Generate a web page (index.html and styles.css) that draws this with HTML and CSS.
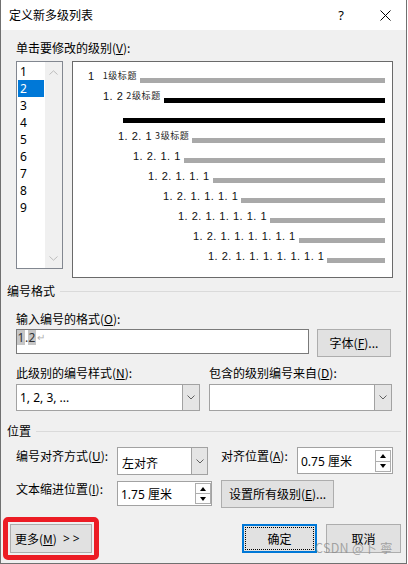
FILE: index.html
```html
<!DOCTYPE html>
<html lang="zh-CN">
<head>
<meta charset="utf-8">
<title>定义新多级列表</title>
<link rel="stylesheet" href="styles.css">
</head>
<body>
<div class="window">
  <header class="titlebar">
    <span class="title">定义新多级列表</span>
    <span class="help">?</span>
    <svg class="close" width="11" height="11" viewBox="0 0 11 11"><path d="M0.5 0.5 L10.5 10.5 M10.5 0.5 L0.5 10.5" stroke="#000" stroke-width="1" fill="none"/></svg>
  </header>
  <main class="content">
    <div class="label pick-label">单击要修改的级别(<u>V</u>):</div>
    <div class="levels-row">
      <div class="listbox">
        <ul class="items">
          <li>1</li><li class="sel">2</li><li>3</li><li>4</li><li>5</li><li>6</li><li>7</li><li>8</li><li>9</li>
        </ul>
        <div class="scrollbar">
          <svg class="sb-arrow" width="9" height="5" viewBox="0 0 9 5"><path d="M0.5 4.5 L4.5 0.8 L8.5 4.5" stroke="#bdbdbd" fill="none"/></svg>
          <svg class="sb-arrow" width="9" height="5" viewBox="0 0 9 5"><path d="M0.5 0.5 L4.5 4.2 L8.5 0.5" stroke="#bdbdbd" fill="none"/></svg>
        </div>
      </div>
      <div class="preview">
        <div class="prow l1"><span class="num">1</span><span class="cap cap1">1级标题</span><span class="bar"></span></div>
        <div class="prow l2"><span class="num">1. 2</span><span class="cap">2级标题</span><span class="bar dark"></span></div>
        <div class="prow lb"><span class="bar dark flush"></span></div>
        <div class="prow l3"><span class="num">1. 2. 1</span><span class="cap">3级标题</span><span class="bar"></span></div>
        <div class="prow l4"><span class="num">1. 2. 1. 1</span><span class="bar"></span></div>
        <div class="prow l5"><span class="num">1. 2. 1. 1. 1</span><span class="bar"></span></div>
        <div class="prow l6"><span class="num">1. 2. 1. 1. 1. 1</span><span class="bar"></span></div>
        <div class="prow l7"><span class="num">1. 2. 1. 1. 1. 1. 1</span><span class="bar"></span></div>
        <div class="prow l8"><span class="num">1. 2. 1. 1. 1. 1. 1. 1</span><span class="bar"></span></div>
        <div class="prow l9"><span class="num">1. 2. 1. 1. 1. 1. 1. 1. 1</span><span class="bar"></span></div>
      </div>
    </div>

    <div class="ghead g-fmt"><span>编号格式</span><span class="gline"></span></div>
    <div class="label fmt-label">输入编号的格式(<u>O</u>):</div>
    <div class="fmt-row">
      <div class="textbox"><span class="hl">1</span>.<span class="hl">2</span><span class="ret">↵</span></div>
      <div class="btn font-btn">字体(<u>F</u>)...</div>
    </div>
    <div class="two-col labels2">
      <div class="label">此级别的编号样式(<u>N</u>):</div>
      <div class="label">包含的级别编号来自(<u>D</u>):</div>
    </div>
    <div class="two-col selects">
      <div class="combo"><span class="combo-text">1, 2, 3, ...</span><span class="combo-btn"><svg width="8" height="5" viewBox="0 0 8 5"><path d="M0.5 0.5 L4 4 L7.5 0.5" stroke="#606060" fill="none"/></svg></span></div>
      <div class="combo"><span class="combo-text"></span><span class="combo-btn"><svg width="8" height="5" viewBox="0 0 8 5"><path d="M0.5 0.5 L4 4 L7.5 0.5" stroke="#606060" fill="none"/></svg></span></div>
    </div>

    <div class="ghead g-pos"><span>位置</span><span class="gline"></span></div>
    <div class="pos-grid">
      <div class="label plabel">编号对齐方式(<u>U</u>):</div>
      <div class="combo combo-align"><span class="combo-text">左对齐</span><span class="combo-btn"><svg width="8" height="5" viewBox="0 0 8 5"><path d="M0.5 0.5 L4 4 L7.5 0.5" stroke="#606060" fill="none"/></svg></span></div>
      <div class="label plabel">对齐位置(<u>A</u>):</div>
      <div class="spinner sp-a"><span class="sp-text">0.75 厘米</span><span class="spin"><span class="spin-btn"><i class="up"></i></span><span class="spin-btn"><i class="down"></i></span></span></div>

      <div class="label plabel">文本缩进位置(<u>I</u>):</div>
      <div class="spinner sp-b"><span class="sp-text">1.75 厘米</span><span class="spin"><span class="spin-btn"><i class="up"></i></span><span class="spin-btn"><i class="down"></i></span></span></div>
      <div class="btn all-btn">设置所有级别(<u>E</u>)...</div>
    </div>

    <div class="bottom-row">
      <div class="mark"><div class="btn more-btn">更多(<u>M</u>) <span class="gt">&gt;&gt;</span></div></div>
      <div class="btn ok-btn"><span class="focus">确定</span></div>
      <div class="btn cancel-btn">取消</div>
    </div>
  </main>
  <div class="watermark">CSDN @卜 寧</div>
</div>
</body>
</html>
```

FILE: styles.css
```css
* { box-sizing: border-box; }
html, body { margin: 0; padding: 0; }
body {
  width: 408px;
  height: 564px;
  overflow: hidden;
  background: #ffffff;
  font-family: "Noto Sans CJK SC", "Noto Sans", sans-serif;
  font-size: 12px;
  color: #000;
}
u { text-decoration: underline; text-underline-offset: 1px; }

.window {
  position: relative;
  width: 407px;
  height: 564px;
  border: 1px solid #707070;
  border-top: none;
  background: #f0f0f0;
  display: flex;
  flex-direction: column;
}

.titlebar {
  height: 30px;
  flex: none;
  background: #fff;
  display: flex;
  align-items: center;
  padding: 0 15px 0 8px;
}
.title { flex: 1; line-height: 16px; }
.help {
  font-family: "Noto Sans", sans-serif;
  font-size: 13px;
  line-height: 16px;
  margin-right: 36px;
}
.close { display: block; margin-top: 1px; }

.content { flex: 1; padding-top: 10px; }

.label { line-height: 16px; white-space: nowrap; }
.pick-label { margin-left: 15px; }

.levels-row {
  display: flex;
  align-items: flex-start;
  gap: 9px;
  margin: 5px 0 0 15px;
}
.listbox {
  width: 47px;
  height: 208px;
  border: 1px solid #828790;
  background: #fff;
  display: flex;
  padding-left: 1px;
}
.items {
  list-style: none;
  margin: 1px 1px 0 0;
  padding: 0;
  width: 26px;
}
.items li {
  height: 17px;
  line-height: 17px;
  padding-left: 2px;
  font-family: "Noto Sans", sans-serif;
}
.items li.sel { background: #0078d7; color: #fff; }
.scrollbar {
  width: 17px;
  background: #f0f0f0;
  display: flex;
  flex-direction: column;
  justify-content: space-between;
  align-items: center;
  padding: 8px 0 7px;
}
.sb-arrow { display: block; }

.preview {
  width: 321px;
  height: 217px;
  border: 1px solid #6a6a6a;
  background: #fff;
  padding: 4px 7px 0 0;
}
.prow { display: flex; align-items: center; height: 20px; }
.num {
  font-family: "Liberation Sans", Arial, sans-serif;
  font-size: 11px;
  letter-spacing: 0.5px;
  white-space: nowrap;
  color: #111;
  line-height: 14px;
}
.cap {
  font-size: 9px;
  letter-spacing: 0.6px;
  line-height: 12px;
  margin-left: 3px;
  color: #222;
  white-space: nowrap;
}
.cap1 { margin-left: 8px; }
.bar {
  flex: 1;
  height: 5px;
  align-self: flex-start;
  margin-top: 12px;
  margin-left: 3px;
  background: #a9a9a9;
}
.bar.dark { background: #000; }
.bar.flush { margin-left: 0; }
.l1 { padding-left: 15px; }
.l2 { padding-left: 30px; }
.lb { padding-left: 50px; }
.l3 { padding-left: 45px; }
.l4 { padding-left: 60px; }
.l5 { padding-left: 75px; }
.l6 { padding-left: 90px; }
.l7 { padding-left: 105px; }
.l8 { padding-left: 120px; }
.l9 { padding-left: 135px; }

.ghead {
  display: flex;
  align-items: center;
  line-height: 16px;
  margin-left: 6px;
}
.g-fmt { margin-top: 5px; }
.g-pos { margin-top: 12px; }
.gline {
  flex: 1;
  height: 1px;
  background: #dadada;
  margin: 0 5px 0 5px;
}

.fmt-label { margin: 12px 0 0 15px; }
.fmt-row {
  display: flex;
  align-items: flex-start;
  gap: 8px;
  margin: 2px 0 0 15px;
}
.textbox {
  width: 293px;
  height: 25px;
  border: 1px solid #7a7a7a;
  background: #fff;
  padding: 0 0 0 0;
  font-family: "Noto Sans", sans-serif;
  font-size: 12px;
  line-height: 15px;
  color: #333;
  display: flex;
  align-items: flex-start;
}
.hl { background: #c6c6c6; padding: 0 0.5px; }
.ret { color: #b0b0b0; font-size: 10px; margin-left: 1px; }

.btn {
  background: #e1e1e1;
  border: 1px solid #adadad;
  height: 28px;
  display: flex;
  align-items: center;
  justify-content: center;
  line-height: 16px;
  white-space: nowrap;
}
.font-btn { width: 74px; }

.two-col {
  display: grid;
  grid-template-columns: 184px 183px;
  column-gap: 9px;
  margin-left: 15px;
}
.labels2 { margin-top: 8px; }
.selects { margin-top: 3px; }
.combo {
  height: 27px;
  border: 1px solid #a2a2a2;
  background: #fff;
  display: flex;
}
.combo-text {
  flex: 1;
  display: flex;
  align-items: center;
  padding-left: 3px;
  font-family: "Noto Sans", "Noto Sans CJK SC", sans-serif;
}
.combo-btn {
  width: 17px;
  background: #e5e5e5;
  border-left: 1px solid #a2a2a2;
  display: flex;
  align-items: center;
  justify-content: center;
}
.combo-btn svg { display: block; }

.pos-grid {
  display: grid;
  grid-template-columns: 101px 104px 76px 96px;
  grid-template-rows: 28px 28px;
  row-gap: 5px;
  margin: 8px 0 0 15px;
  align-items: start;
}
.plabel { margin-top: 1px; }
.combo-align { width: 91px; height: 28px; }
.combo-align .combo-text { font-family: "Noto Sans CJK SC", sans-serif; padding-left: 4px; padding-top: 2px; }
.combo-align .combo-btn { width: 16px; }

.spinner {
  border: 1px solid #a2a2a2;
  background: #fff;
  display: flex;
}
.sp-a { width: 96px; height: 27px; }
.sp-b { width: 95px; height: 25px; margin-top: 1px; }
.sp-text {
  flex: 1;
  display: flex;
  align-items: center;
  padding-left: 3px;
  font-family: "Noto Sans", "Noto Sans CJK SC", sans-serif;
}
.spin {
  width: 16px;
  display: flex;
  flex-direction: column;
}
.sp-a .spin { margin: 2px 1px 1px 0; }
.sp-b .spin { margin: 1px 0 1px 0; }
.spin-btn {
  flex: 1;
  border: 1px solid #adadad;
  background: #fdfdfd;
  display: flex;
  align-items: center;
  justify-content: center;
}
.spin-btn + .spin-btn { border-top: none; }
.up, .down { display: block; width: 0; height: 0; border-left: 3.5px solid transparent; border-right: 3.5px solid transparent; }
.up { border-bottom: 4px solid #000; }
.down { border-top: 4px solid #000; }

.all-btn { grid-column: 3 / span 2; width: 113px; }

.bottom-row {
  display: flex;
  align-items: center;
  margin: 9px 0 0 2px;
}
.mark {
  border: 5px solid #ec1c24;
  border-radius: 5px;
  padding: 2px;
}
.more-btn {
  width: 82px;
  height: 29px;
  justify-content: flex-start;
  padding-left: 4px;
}
.gt { margin-left: 6px; letter-spacing: 3px; font-family: "Noto Sans", sans-serif; }
.ok-btn {
  width: 75px;
  height: 29px;
  margin-left: 143px;
  border: 2px solid #0078d7;
  padding: 1px;
  align-items: stretch;
}
.focus {
  flex: 1;
  border: 1px dotted #000;
  display: flex;
  align-items: center;
  justify-content: center;
}
.cancel-btn { width: 75px; height: 29px; margin-left: 9px; }

.watermark {
  position: absolute;
  left: 314px;
  top: 540px;
  font-size: 12.5px;
  line-height: 16px;
  color: rgba(140, 140, 140, 0.75);
  white-space: nowrap;
  letter-spacing: 0.3px;
}
```
